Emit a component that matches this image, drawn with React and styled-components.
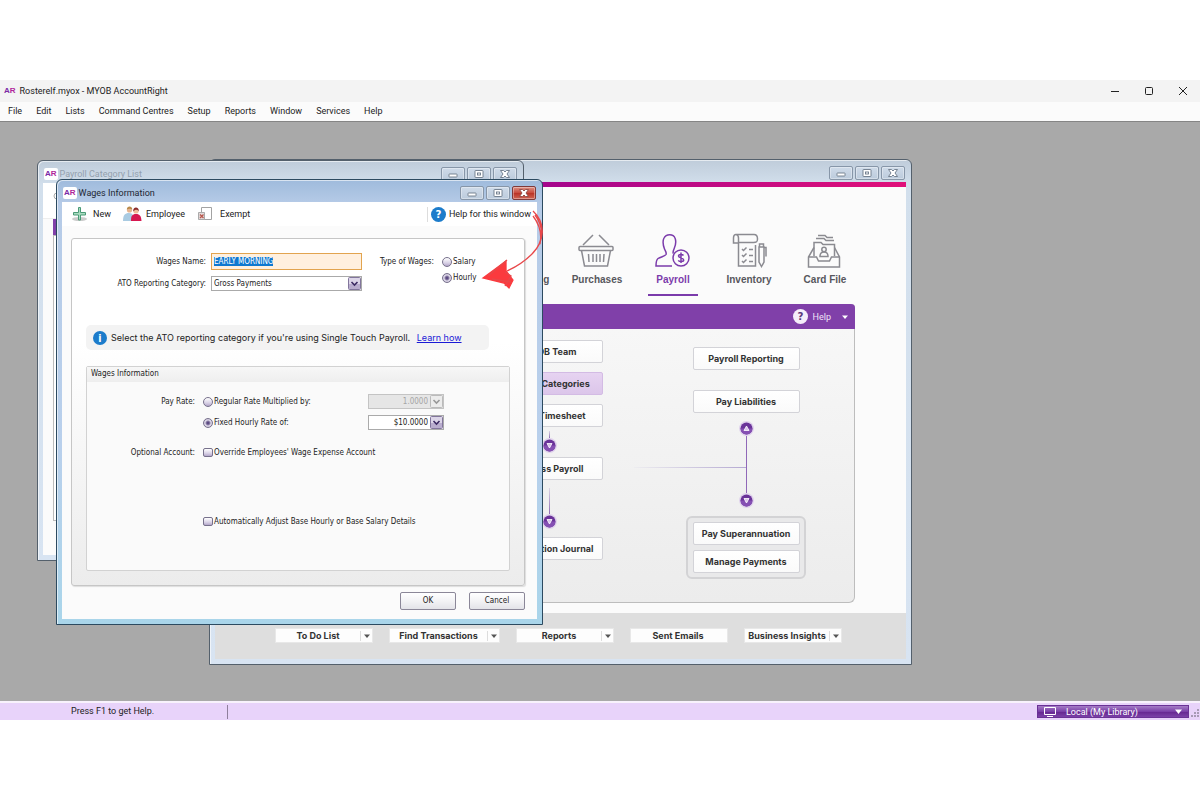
import React from 'react';
import styled, { createGlobalStyle, css } from 'styled-components';

const GlobalStyle = createGlobalStyle`
  * {
    box-sizing: border-box;
  }

  body {
    margin: 0;
    background: #fff;
    color: #222;
    font-family: Roboto, 'Liberation Sans', sans-serif;
    font-size: 9px;
    line-height: 12px;
  }

  button, input, select {
    margin: 0;
    font: inherit;
    color: inherit;
  }
`;

const formFont = "'DejaVu Sans Condensed', 'DejaVu Sans', sans-serif";

/* Application shell */

const Page = styled.div`
  display: flex;
  flex-direction: column;
  height: 100vh;
  min-height: 720px;
  padding: 80px 0;
`;

const AppBar = styled.header`
  display: flex;
  align-items: center;
  justify-content: space-between;
  height: 22px;
  padding: 0 11px 0 4px;
  background: #f3f3f3;
`;

const AppTitle = styled.h1`
  display: flex;
  align-items: center;
  gap: 4px;
  margin: 0;
  font-size: 9px;
  font-weight: 400;
`;

const Logo = styled.span`
  color: #7b2aa5;
  font-family: 'Liberation Sans', sans-serif;
  font-size: 8px;
  font-weight: 700;
  line-height: 12px;

  ${(props) => props.$tile && css`
    padding: 0 1px;
    border-radius: 2px;
    background: #fff;
  `}

  b {
    color: #b0279b;
  }
`;

const AppControls = styled.div`
  display: flex;
  gap: 22px;
`;

const AppControl = styled.button`
  display: flex;
  padding: 0;
  border: 0;
  background: none;
`;

const MenuBar = styled.nav`
  display: flex;
  align-items: center;
  gap: 14px;
  height: 20px;
  padding: 0 8px 2px;
  border-bottom: 1px solid #858585;
  background: #fbfbfb;

  a {
    color: #222;
    text-decoration: none;
  }
`;

const Desktop = styled.main`
  position: relative;
  flex: 1;
  overflow: hidden;
  background: #a9a9a9;
`;

const StatusBar = styled.footer`
  display: flex;
  align-items: center;
  justify-content: space-between;
  height: 19px;
  border-top: 2px solid #f8f2fc;
  background: #e8d3fa;
`;

const StatusHint = styled.p`
  width: 228px;
  margin: 0;
  padding: 0 0 2px 71px;
  border-right: 1px solid #8f7f9c;
`;

const StatusRight = styled.div`
  display: flex;
  align-items: center;
  gap: 2px;
`;

const LibraryButton = styled.button`
  display: flex;
  align-items: center;
  width: 152px;
  height: 13px;
  padding: 0 5px 0 5px;
  border: 1px solid #6a3196;
  background: linear-gradient(#a57cc6, #7a3fa8 50%, #64258f 51%, #7b41a8);
  color: #fff;
  text-align: left;

  span {
    flex: 1;
    margin-left: 9px;
  }
`;

/* Windows */

const Window = styled.section`
  position: absolute;
  left: ${(props) => props.$x}px;
  top: ${(props) => props.$y}px;
  display: flex;
  flex-direction: column;
  width: ${(props) => props.$width}px;
  height: ${(props) => props.$height}px;
  padding: 0 5px 5px;
  border: 1px solid ${(props) => (props.$active ? '#2c4a60' : '#54606c')};
  border-radius: 6px 6px 0 0;
  background: ${(props) => (props.$active
    ? 'linear-gradient(#9fbbdc, #b6cbe7 24px, #b9d0ec 60%, #a9d5ea)'
    : 'linear-gradient(#bfccda, #d2dfec 24px, #d8e4f2)')};
  box-shadow: inset 1px 1px 0 rgba(255, 255, 255, 0.6);
`;

const WindowBar = styled.header`
  display: flex;
  flex-shrink: 0;
  align-items: center;
  justify-content: space-between;
  height: 22px;
  padding: 4px 1px 0;
`;

const WindowTitle = styled.h2`
  display: flex;
  align-items: center;
  gap: 2px;
  margin: 0;
  color: ${(props) => (props.$muted ? '#93a0ad' : '#1e2733')};
  font-size: 9px;
  font-weight: 400;
`;

const WindowControls = styled.div`
  display: flex;
  gap: 2px;
  margin-left: auto;
`;

const WindowControl = styled.button`
  display: flex;
  align-items: center;
  justify-content: center;
  width: 24px;
  height: 14px;
  padding: 0;
  border: 1px solid #8796a8;
  border-radius: 2px;
  background: linear-gradient(#cfdbe9, #bccbdc);
  box-shadow: inset 0 0 0 1px rgba(255, 255, 255, 0.35);

  ${(props) => props.$danger && css`
    border-color: #7f3a3a;
    background: linear-gradient(#dd9185, #c8483b 50%, #b93226 51%, #cf6453);
  `}
`;

const WindowBody = styled.div`
  display: flex;
  flex: 1;
  flex-direction: column;
  min-height: 0;
  background: #fbfbfb;
`;

/* Command centre */

const Stripe = styled.div`
  height: 5px;
  background: linear-gradient(90deg, #7a0a97, #a5068c 48%, #e0107a);
`;

const CentreNav = styled.nav`
  display: flex;
  justify-content: flex-end;
  gap: 10px;
  height: 117px;
  padding: 46px 48px 0 0;
`;

const CentreLink = styled.a`
  display: flex;
  flex-direction: column;
  align-items: center;
  width: 66px;
  color: ${(props) => (props.$active ? '#7b3bab' : '#57575d')};
  font-family: 'Liberation Sans', sans-serif;
  font-size: 10px;
  font-weight: 700;
  text-decoration: none;

  svg {
    height: 38px;
    margin-bottom: 3px;
  }

  &::after {
    content: '';
    width: 50px;
    height: 2px;
    margin-top: 8px;
    background: ${(props) => (props.$active ? '#7b3bab' : 'transparent')};
  }
`;

const FlowPanel = styled.div`
  display: flex;
  flex-direction: column;
  height: 299px;
  margin: 0 51px;
  border: 1px solid #bdbdbd;
  border-top: 0;
  border-radius: 4px 4px 6px 6px;
  background: linear-gradient(#f8f8f8, #ececec);
`;

const FlowHeader = styled.div`
  display: flex;
  align-items: center;
  justify-content: flex-end;
  gap: 5px;
  height: 25px;
  margin: 0 -1px;
  padding-right: 5px;
  border-radius: 4px 4px 0 0;
  background: #8040a9;
  color: #efe3f7;

  svg:last-child {
    margin-left: 4px;
  }
`;

const FlowBody = styled.div`
  display: flex;
  flex: 1;
  justify-content: flex-end;
  gap: 83px;
  padding-right: 48px;
`;

const FlowColumn = styled.div`
  display: flex;
  flex-direction: column;
  align-items: center;
  width: ${(props) => props.$width}px;
  padding-top: ${(props) => props.$top}px;
`;

const FlowButton = styled.button`
  flex-shrink: 0;
  width: 107px;
  height: 23px;
  margin-top: ${(props) => props.$gap || 0}px;
  padding: 0;
  border: 1px solid ${(props) => (props.$active ? '#d3bbe4' : '#d3d3d8')};
  border-radius: 2px;
  background: ${(props) => (props.$active ? 'linear-gradient(#e6d3f1, #dcc6ea)' : 'linear-gradient(#fff, #fafafa)')};
  color: #333;
  font-family: Inter, sans-serif;
  font-weight: 700;
  white-space: nowrap;
`;

const Connector = styled.div`
  display: flex;
  flex-direction: column;
  align-items: center;
  height: ${(props) => props.$height}px;
  padding: ${(props) => props.$pad}px 0;
`;

const Line = styled.div`
  position: relative;
  flex: 1;
  width: 1px;
  background: ${(props) => (props.$fade ? 'linear-gradient(#dcd5e4, #8f6ab3)' : '#9068b8')};

  ${(props) => props.$branch && css`
    &::before {
      content: '';
      position: absolute;
      top: 31px;
      right: 1px;
      width: 112px;
      height: 1px;
      background: linear-gradient(90deg, #ededf0, #b5a9d2);
    }
  `}
`;

const FlowGroup = styled.div`
  display: flex;
  flex-direction: column;
  align-items: center;
  width: 120px;
  padding: 4px 5px;
  border: 2px solid #d3d3d5;
  border-radius: 6px;
  background: #e9e9ea;
`;

const QuickBar = styled.footer`
  display: flex;
  flex: 1;
  align-items: flex-start;
  justify-content: center;
  gap: 16px;
  margin-top: 10px;
  padding: 15px 4px 0 0;
  background: #dedede;
`;

const QuickButton = styled.button`
  display: flex;
  align-items: center;
  width: ${(props) => props.$width}px;
  height: 15px;
  padding: 0 2px 0 0;
  border: 1px solid #e8e8e8;
  background: #fdfdfd;
  color: #333;
  font-family: Inter, sans-serif;
  font-weight: 700;
  white-space: nowrap;

  span {
    flex: 1;
    text-align: center;
  }

  svg {
    padding-left: 3px;
    border-left: 1px solid #ddd;
  }
`;

/* Category list */

const ListStrip = styled.div`
  height: 36px;
  padding: 9px 10px;
  border-bottom: 1px solid #eee;
  background: #fff;
`;

const ListTab = styled.div`
  width: 80px;
  height: 16px;
  margin: 0 10px;
  background: #8040a9;
`;

const ListPane = styled.div`
  flex: 1;
  margin: 0 10px 34px;
  border: 1px solid #bbb;
  background: #fff;
`;

/* Wages window */

const Toolbar = styled.div`
  display: flex;
  flex-shrink: 0;
  align-items: center;
  height: 24px;
  padding: 0 6px 0 9px;
  background: #fff;
`;

const ToolButton = styled.button`
  display: flex;
  align-items: center;
  gap: ${(props) => props.$gap || 5}px;
  margin-right: 12px;
  padding: 0;
  border: 0;
  background: none;
`;

const HelpButton = styled(ToolButton)`
  margin: 0 0 0 auto;
  padding-left: 3px;
  border-left: 1px solid #ddd;
`;

const FormCard = styled.div`
  display: flex;
  flex: 1;
  flex-direction: column;
  margin: 12px 12px 0 9px;
  padding: 14px;
  border: 1px solid #c6c6c6;
  border-radius: 3px;
  background: linear-gradient(#fff 30%, #ececec);
  box-shadow: 1px 1px 1px #ddd;
  font-family: ${formFont};
  font-size: 8px;
`;

const FormTop = styled.div`
  display: grid;
  grid-template-columns: 125px 151px 72px 1fr;
  grid-template-rows: 17px 17px;
  row-gap: 5px;
  align-items: center;
`;

const Label = styled.label`
  padding-right: 5px;
  text-align: right;
  white-space: nowrap;
`;

const GroupLabel = styled.span`
  text-align: right;
  white-space: nowrap;
`;

const TextInput = styled.input`
  width: 100%;
  height: 17px;
  padding: 0 2px;
  border: 1px solid #e2a44f;
  outline: 0;
  background: #fff0df;

  &::selection {
    background: #0f78d0;
    color: #fff;
  }
`;

const SelectBox = styled.span`
  position: relative;
  display: block;
  width: ${(props) => (props.$small ? '76px' : '100%')};
  height: 15px;

  svg {
    position: absolute;
    top: 1px;
    right: 1px;
    pointer-events: none;
  }
`;

const Select = styled.select`
  width: 100%;
  height: 15px;
  padding: 0 15px 0 2px;
  border: 1px solid #aaa;
  border-radius: 0;
  appearance: none;
  background: #fff;
  text-align-last: ${(props) => (props.$right ? 'right' : 'left')};

  &:disabled {
    border-color: #c4c4c4;
    background: #e6e6e6;
    color: #a5a5a5;
    opacity: 1;
  }
`;

const RadioStack = styled.div`
  display: flex;
  flex-direction: column;
  align-self: start;
  gap: 4px;
  grid-row: span 2;
  padding: 3px 0 0 8px;
`;

const Choice = styled.label`
  display: flex;
  align-items: center;
  gap: 1px;
  white-space: nowrap;

  input {
    width: 10px;
    height: 10px;
    border: 1px solid #77718c;
    appearance: none;
    background: linear-gradient(#fff, #d9d2e6 60%, #b5a8cb);
  }

  input[type='radio'] {
    border-radius: 50%;
  }

  input[type='radio']:checked {
    background: radial-gradient(circle, #5d4c83 0 1px, #9488ad 2px, #e0dbea 3px, #b9aecb 5px);
  }

  input[type='checkbox'] {
    height: 9px;
    border-radius: 2px;
  }
`;

const Banner = styled.p`
  display: flex;
  align-items: center;
  gap: 4px;
  width: 403px;
  height: 25px;
  margin: 33px 0 16px;
  padding: 0 7px;
  border-radius: 5px;
  background: #f3f3f3;
  font-family: Inter, sans-serif;
  font-size: 9px;

  a {
    margin-left: 4px;
    color: #1a1ad6;
  }
`;

const Group = styled.section`
  display: flex;
  flex: 1;
  flex-direction: column;
  border: 1px solid #d2d2d2;
  border-radius: 2px;
  background: #fafafa;
`;

const GroupTitle = styled.h3`
  height: 15px;
  margin: 0;
  padding: 1px 4px;
  background: linear-gradient(#f7f7f7, #eee);
  font-size: 8px;
  font-weight: 400;
`;

const GroupRows = styled.div`
  display: grid;
  grid-template-columns: 108px 157px 76px;
  grid-template-rows: 15px 6px 15px 15px 15px 54px 15px;
  column-gap: 8px;
  align-items: center;
  padding-top: 12px;
`;

const Spacer = styled.div`
  grid-column: 1 / -1;
`;

const WideChoice = styled(Choice)`
  grid-column: 2 / -1;
`;

const Actions = styled.div`
  display: flex;
  justify-content: flex-end;
  gap: 13px;
  padding: 6px 12px 9px;
`;

const ActionButton = styled.button`
  width: 56px;
  height: 18px;
  padding: 0;
  border: 1px solid #8b8798;
  border-radius: 2px;
  background: linear-gradient(#fff, #f3f3f5 50%, #e3e3e8);
  font-family: ${formFont};
  font-size: 8px;
`;

const Scribble = styled.svg`
  position: absolute;
  left: 480px;
  top: 86px;
  pointer-events: none;
`;

/* Glyphs */

const Caret = ({ color = '#555' }) => (
  <svg width="10" height="10" viewBox="0 0 6 10">
    <path d="M0 3.5h6L3 7z" fill={color} />
  </svg>
);

const DropGlyph = ({ muted }) => (
  <svg width="13" height="13" viewBox="0 0 13 13">
    <rect x="0.5" y="0.5" width="12" height="12" rx="1" fill={muted ? '#ececec' : '#dcd5e8'} stroke={muted ? '#bbb' : '#82769c'} />
    {!muted && <path d="M1 7h11v5H1z" fill="#b9adce" />}
    <path d="M3.5 5l3 3 3-3" fill="none" stroke={muted ? '#999' : '#3c2a63'} strokeWidth="1.6" />
  </svg>
);

const FlowArrow = ({ up }) => (
  <svg width="15" height="15" viewBox="0 0 15 15">
    <circle cx="7.5" cy="7.5" r="7.500" fill="#e0d3ec" />
    <circle cx="7.5" cy="7.5" r="6" fill="#6a3399" />
    <path d="M1.5 7.5a6 6 0 0 0 12 0z" fill="#8550b3" />
    <path d={up ? 'M7.5 5l2.500 4.500h-5z' : 'M5 5.500h5l-2.500 4.500z'} fill="#d9c4ec" stroke="#fff" strokeWidth="0.8" />
  </svg>
);

const Badge = ({ size, fill, color, children }) => (
  <svg width={size} height={size} viewBox="0 0 16 16">
    <circle cx="8" cy="8" r="8" fill={fill} />
    <text x="8" y="12" textAnchor="middle" fontFamily="DejaVu Sans" fontWeight="700" fontSize="11" fill={color}>{children}</text>
  </svg>
);

const ICONS = {
  clock: <path d="M18 5a14 14 0 1 0 1 0M18 11v9l6 4" />,
  basket: (
    <>
      <path d="M5 12L15 2M31 12L21 2" />
      <rect x="1" y="13.5" width="34" height="4" rx="1" />
      <path d="M3.5 17.5L6.500 33h23l3-15.500M10.500 21l.5 8M15 21v8M18.500 21v8M22 21v8M26 21l-.5 8" />
    </>
  ),
  payroll: (
    <>
      <path d="M18 33H2c0-4 0-6 2-7.500 3-2 7-2 8-4 .8-2-.5-3-1.500-5.500C9 12 8.500 8 10 5c2-4.500 9.500-4.500 11 0 1.200 3 .7 7-.8 10.500-.8 2-1.500 3-1 5" />
      <circle cx="27" cy="25" r="8" />
      <path d="M29.500 22.500c-1-1.500-5-1.500-5 .5 0 2.300 5.200 1.500 5.200 4 0 2-4.300 2-5.400.3M27 19.500v10.500" />
    </>
  ),
  inventory: (
    <>
      <path d="M8.500 10H3.500V5c0-5 5-4 5 0v28h17V12M6 1.500h18c3 0 3.500 2 3.500 4.500 0 3-1 3.500-4 3.500H9" />
      <path d="M12 16l1.500 1.500 3-3M12 22l1.500 1.500 3-3M12 28l1.500 1.500 3-3M19 16.500h4M19 22.500h4M19 28.500h4" />
      <path d="M29 14h5v15l-2.500 4.500L29 29zM29.500 14v-3h4v3M34 14.500h2v9" />
    </>
  ),
  cards: (
    <>
      <path d="M12 2.500h7l2 2h6M10 5.500h8l2 2h8" />
      <path d="M8 23V9.500h7l2 2h11.500V23" />
      <path d="M8 14.500L2.500 24v10h31V24l-5-9.500M2.500 24h8l2 4h11l2-4h8" />
      <circle cx="18" cy="16.500" r="2.200" />
      <path d="M14 23.500c0-6 8-6 8 0z" />
    </>
  ),
};

const CentreIcon = ({ name }) => (
  <svg width="38" height="38" viewBox="0 0 38 38" fill="none" stroke={name === 'payroll' ? '#7b3bab' : '#8b8b91'} strokeWidth="1.5">
    {ICONS[name]}
  </svg>
);

const NewIcon = () => (
  <svg width="17" height="16" viewBox="0 0 17 16">
    <ellipse cx="8.500" cy="13" rx="7.500" ry="2" fill="#ccc" />
    <path d="M7.500 1.500h2v5h5v2.500h-5v5h-2V9h-5V6.500h5z" fill="#a9dcc0" stroke="#4a9a76" />
  </svg>
);

const EmployeeIcon = () => (
  <svg width="19" height="16" viewBox="0 0 19 16">
    <path d="M0 15c0-6 2-8 6-8s5 3 5 8z" fill="#a9cbe2" />
    <circle cx="6.500" cy="4" r="2.600" fill="#e6b48f" />
    <path d="M3.800 3.500c0-4 5.500-4 5.500 0-2-1-3.500-1-5.500 0z" fill="#b98a4a" />
    <path d="M8 15c0-5 1-7 5-7s5 2 5.500 7z" fill="#d6174f" />
    <circle cx="13" cy="5" r="2.600" fill="#f0bd9a" />
    <path d="M10.200 5.500c-.5-5.500 6-5.500 5.700 0-1-2-3.700-2.500-5.700 0z" fill="#8b2a2a" />
  </svg>
);

const ExemptIcon = () => (
  <svg width="17" height="16" viewBox="0 0 17 16">
    <path d="M4.500 1.500h10v12h-10z" fill="#fff" stroke="#a3a3a3" />
    <path d="M1.500 6.500h6v7h-6z" fill="#e3dada" stroke="#aaa" />
    <path d="M3 8.500l3.500 3.500M6.500 8.500l-3.500 3.500" stroke="#b8574c" strokeWidth="1.300" />
  </svg>
);

const SearchIcon = () => (
  <svg width="10" height="10" viewBox="0 0 10 10" fill="none" stroke="#aaa">
    <circle cx="4" cy="4" r="3" />
    <path d="M6 6l3 3" />
  </svg>
);

const ControlGlyph = ({ kind, light }) => (
  <svg width="12" height="10" viewBox="0 0 12 10" fill="#fff" stroke={light ? '#8c4a44' : '#6b7888'} strokeWidth="0.9">
    {kind === 'min' && <rect x="2" y="5" width="8" height="3" rx="0.500" />}
    {kind === 'max' && (
      <>
        <rect x="2" y="1.500" width="8" height="7" rx="0.500" />
        <rect x="4.500" y="4" width="3" height="2" />
      </>
    )}
    {kind === 'close' && <path d="M1.500 1.500h3L6 3l1.500-1.500h3L8 5l2.500 3.500h-3L6 7 4.500 8.500h-3L4 5z" />}
  </svg>
);

const Controls = ({ active }) => (
  <WindowControls>
    <WindowControl type="button" aria-label="Minimise"><ControlGlyph kind="min" /></WindowControl>
    <WindowControl type="button" aria-label="Maximise"><ControlGlyph kind="max" /></WindowControl>
    <WindowControl type="button" aria-label="Close" $danger={active}><ControlGlyph kind="close" light={active} /></WindowControl>
  </WindowControls>
);

const Brand = ({ tile }) => <Logo $tile={tile}>A<b>R</b></Logo>;

const MENU = ['File', 'Edit', 'Lists', 'Command Centres', 'Setup', 'Reports', 'Window', 'Services', 'Help'];

const CENTRES = [
  { label: 'Time Billing', icon: 'clock' },
  { label: 'Purchases', icon: 'basket' },
  { label: 'Payroll', icon: 'payroll', active: true },
  { label: 'Inventory', icon: 'inventory' },
  { label: 'Card File', icon: 'cards' },
];

const QUICK = [
  { label: 'To Do List', width: 98, menu: true },
  { label: 'Find Transactions', width: 111, menu: true },
  { label: 'Reports', width: 98, menu: true },
  { label: 'Sent Emails', width: 98 },
  { label: 'Business Insights', width: 98, menu: true },
];

function CommandCentre() {
  return (
    <Window $x={209} $y={37} $width={703} $height={506}>
      <WindowBar><Controls /></WindowBar>
      <WindowBody>
        <Stripe />
        <CentreNav>
          {CENTRES.map((item) => (
            <CentreLink key={item.label} href="#" $active={item.active}>
              <CentreIcon name={item.icon} />
              {item.label}
            </CentreLink>
          ))}
        </CentreNav>
        <FlowPanel>
          <FlowHeader>
            <Badge size={15} fill="#f5edfa" color="#5b3a7a">?</Badge>
            Help
            <Caret color="#fff" />
          </FlowHeader>
          <FlowBody>
            <FlowColumn $width={107} $top={11}>
              <FlowButton type="button">MYOB Team</FlowButton>
              <FlowButton type="button" $active $gap={9}>Payroll Categories</FlowButton>
              <FlowButton type="button" $gap={9}>Enter Timesheet</FlowButton>
              <Connector $height={30} $pad={4}>
                <Line $fade />
                <FlowArrow />
              </Connector>
              <FlowButton type="button">Process Payroll</FlowButton>
              <Connector $height={57} $pad={8}>
                <Line $fade />
                <FlowArrow />
              </Connector>
              <FlowButton type="button">Transaction Journal</FlowButton>
            </FlowColumn>
            <FlowColumn $width={120} $top={18}>
              <FlowButton type="button">Payroll Reporting</FlowButton>
              <FlowButton type="button" $gap={20}>Pay Liabilities</FlowButton>
              <Connector $height={103} $pad={8}>
                <FlowArrow up />
                <Line $branch />
                <FlowArrow />
              </Connector>
              <FlowGroup>
                <FlowButton type="button">Pay Superannuation</FlowButton>
                <FlowButton type="button" $gap={5}>Manage Payments</FlowButton>
              </FlowGroup>
            </FlowColumn>
          </FlowBody>
        </FlowPanel>
        <QuickBar>
          {QUICK.map((item) => (
            <QuickButton key={item.label} type="button" $width={item.width}>
              <span>{item.label}</span>
              {item.menu && <Caret />}
            </QuickButton>
          ))}
        </QuickBar>
      </WindowBody>
    </Window>
  );
}

function CategoryList() {
  return (
    <Window $x={37} $y={38} $width={487} $height={401}>
      <WindowBar>
        <WindowTitle $muted><Brand tile />Payroll Category List</WindowTitle>
        <Controls />
      </WindowBar>
      <WindowBody>
        <ListStrip><SearchIcon /></ListStrip>
        <ListTab />
        <ListPane />
      </WindowBody>
    </Window>
  );
}

function WagesWindow() {
  return (
    <Window $active $x={56} $y={57} $width={487} $height={446}>
      <WindowBar>
        <WindowTitle><Brand tile />Wages Information</WindowTitle>
        <Controls active />
      </WindowBar>
      <WindowBody>
        <Toolbar>
          <ToolButton type="button"><NewIcon />New</ToolButton>
          <ToolButton type="button" $gap={4}><EmployeeIcon />Employee</ToolButton>
          <ToolButton type="button" $gap={6}><ExemptIcon />Exempt</ToolButton>
          <HelpButton type="button" $gap={3}>
            <Badge size={15} fill="#1c7ccb" color="#fff">?</Badge>
            Help for this window
          </HelpButton>
        </Toolbar>
        <FormCard>
          <FormTop>
            <Label htmlFor="wages-name">Wages Name:</Label>
            <TextInput
              id="wages-name"
              defaultValue="EARLY MORNING"
              autoFocus
              onFocus={(e) => e.target.select()}
            />
            <GroupLabel>Type of Wages:</GroupLabel>
            <RadioStack>
              <Choice><input type="radio" name="type" />Salary</Choice>
              <Choice><input type="radio" name="type" defaultChecked />Hourly</Choice>
            </RadioStack>
            <Label htmlFor="ato">ATO Reporting Category:</Label>
            <SelectBox>
              <Select id="ato"><option>Gross Payments</option></Select>
              <DropGlyph />
            </SelectBox>
          </FormTop>
          <Banner>
            <Badge size={14} fill="#1c7ccb" color="#fff">i</Badge>
            <span>
              Select the ATO reporting category if you&apos;re using Single Touch Payroll. <a href="#">Learn how</a>
            </span>
          </Banner>
          <Group>
            <GroupTitle>Wages Information</GroupTitle>
            <GroupRows>
              <GroupLabel>Pay Rate:</GroupLabel>
              <Choice><input type="radio" name="rate" />Regular Rate Multiplied by:</Choice>
              <SelectBox $small>
                <Select $right disabled aria-label="Multiplier"><option>1.0000</option></Select>
                <DropGlyph muted />
              </SelectBox>
              <Spacer />
              <span />
              <Choice><input type="radio" name="rate" defaultChecked />Fixed Hourly Rate of:</Choice>
              <SelectBox $small>
                <Select $right aria-label="Hourly rate"><option>$10.0000</option></Select>
                <DropGlyph />
              </SelectBox>
              <Spacer />
              <GroupLabel>Optional Account:</GroupLabel>
              <WideChoice><input type="checkbox" />Override Employees&apos; Wage Expense Account</WideChoice>
              <Spacer />
              <WideChoice><input type="checkbox" />Automatically Adjust Base Hourly or Base Salary Details</WideChoice>
            </GroupRows>
          </Group>
        </FormCard>
        <Actions>
          <ActionButton type="button">OK</ActionButton>
          <ActionButton type="button">Cancel</ActionButton>
        </Actions>
      </WindowBody>
    </Window>
  );
}

function App() {
  return (
    <Page>
      <GlobalStyle />
      <AppBar>
        <AppTitle><Brand />Rosterelf.myox - MYOB AccountRight</AppTitle>
        <AppControls>
          <AppControl type="button" aria-label="Minimise">
            <svg width="12" height="12" stroke="#222"><path d="M2 6.500h8" /></svg>
          </AppControl>
          <AppControl type="button" aria-label="Maximise">
            <svg width="12" height="12" fill="none" stroke="#222"><rect x="2.500" y="2.500" width="7" height="7" rx="1" /></svg>
          </AppControl>
          <AppControl type="button" aria-label="Close">
            <svg width="12" height="12" stroke="#222"><path d="M2 2l8 8M10 2l-8 8" /></svg>
          </AppControl>
        </AppControls>
      </AppBar>
      <MenuBar>
        {MENU.map((item) => <a key={item} href="#">{item}</a>)}
      </MenuBar>

      <Desktop>
        <CommandCentre />
        <CategoryList />
        <WagesWindow />
        {/* Hand drawn pointer to the Hourly option */}
        <Scribble width="68" height="84" viewBox="0 0 68 84" fill="none" stroke="#e8484a" strokeWidth="1.300">
          <path d="M53 3c13 12 12 30-1 43-7 7-14 12-25 17M55 7c9 12 9 26-2 38M53 8c7 9 9 18 7 28" />
          <path d="M3 70l23-17v10l7 9-4 8-5-5z" fill="#fb3a3e" stroke="#fb3a3e" />
          <path d="M8 68l19-16M12 71l19 3M25 64l6 4-6 10" />
        </Scribble>
      </Desktop>

      <StatusBar>
        <StatusHint>Press F1 to get Help.</StatusHint>
        <StatusRight>
          <LibraryButton type="button">
            <svg width="14" height="12" viewBox="0 0 14 12" fill="none" stroke="#fff">
              <path d="M1.500 1.500h11v7h-11zM4 10.500h6" />
            </svg>
            <span>Local (My Library)</span>
            <svg width="9" height="10" viewBox="0 0 9 10"><path d="M1 2.500h7L4.500 7z" fill="#fff" /></svg>
          </LibraryButton>
          <svg width="9" height="14" fill="#a79ab5">
            <path d="M6 4h2v2H6zM3 7h2v2H3zM6 7h2v2H6zM0 10h2v2H0zM3 10h2v2H3zM6 10h2v2H6z" />
          </svg>
        </StatusRight>
      </StatusBar>
    </Page>
  );
}

export default App;
